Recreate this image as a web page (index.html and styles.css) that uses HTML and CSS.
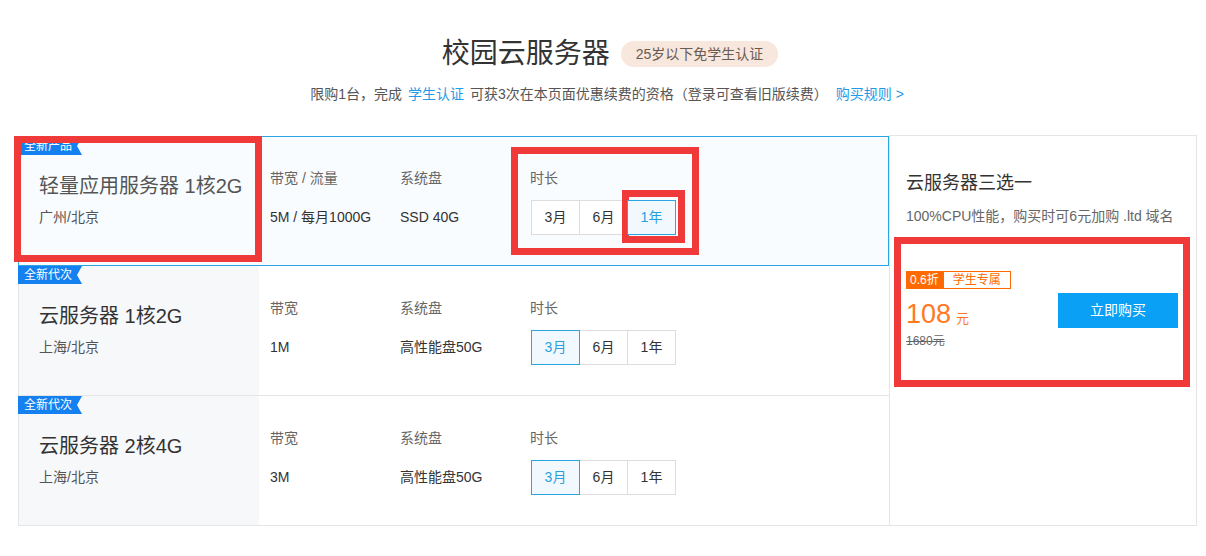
FILE: index.html
```html
<!DOCTYPE html>
<html lang="zh-CN">
<head>
<meta charset="utf-8">
<title>校园云服务器</title>
<link rel="stylesheet" href="styles.css">
</head>
<body>
<div class="page">
  <header class="head">
    <div class="title-line">
      <h1>校园云服务器</h1>
      <span class="pill">25岁以下免学生认证</span>
    </div>
    <p class="sub">限购1台，完成<a class="link">学生认证</a>可获3次在本页面优惠续费的资格（登录可查看旧版续费）<a class="link rule">购买规则 &gt;</a></p>
  </header>

  <section class="plans">
    <div class="rows">
      <div class="row active">
        <div class="name-cell">
          <span class="tag">全新产品</span>
          <div class="name">轻量应用服务器 1核2G</div>
          <div class="region">广州/北京</div>
        </div>
        <div class="spec">
          <div class="lbl">带宽 / 流量</div>
          <div class="val">5M / 每月1000G</div>
        </div>
        <div class="spec">
          <div class="lbl">系统盘</div>
          <div class="val">SSD 40G</div>
        </div>
        <div class="spec dur">
          <div class="lbl">时长</div>
          <div class="opts"><span class="opt">3月</span><span class="opt">6月</span><span class="opt on">1年</span></div>
        </div>
      </div>

      <div class="row">
        <div class="name-cell">
          <span class="tag">全新代次</span>
          <div class="name">云服务器 1核2G</div>
          <div class="region">上海/北京</div>
        </div>
        <div class="spec">
          <div class="lbl">带宽</div>
          <div class="val">1M</div>
        </div>
        <div class="spec">
          <div class="lbl">系统盘</div>
          <div class="val">高性能盘50G</div>
        </div>
        <div class="spec dur">
          <div class="lbl">时长</div>
          <div class="opts"><span class="opt on">3月</span><span class="opt">6月</span><span class="opt">1年</span></div>
        </div>
      </div>

      <div class="row">
        <div class="name-cell">
          <span class="tag">全新代次</span>
          <div class="name">云服务器 2核4G</div>
          <div class="region">上海/北京</div>
        </div>
        <div class="spec">
          <div class="lbl">带宽</div>
          <div class="val">3M</div>
        </div>
        <div class="spec">
          <div class="lbl">系统盘</div>
          <div class="val">高性能盘50G</div>
        </div>
        <div class="spec dur">
          <div class="lbl">时长</div>
          <div class="opts"><span class="opt on">3月</span><span class="opt">6月</span><span class="opt">1年</span></div>
        </div>
      </div>
    </div>

    <aside class="buy">
      <h3 class="buy-title">云服务器三选一</h3>
      <p class="desc">100%CPU性能，购买时可6元加购 .ltd 域名</p>
      <div class="deal">
        <div class="price-block">
          <div class="labels"><span class="off">0.6折</span><span class="stu">学生专属</span></div>
          <div class="price"><span class="num">108</span><span class="unit">元</span></div>
          <div class="orig">1680元</div>
        </div>
        <a class="cta">立即购买</a>
      </div>
    </aside>
  </section>

  <div class="mark m1"></div>
  <div class="mark m2"></div>
  <div class="mark m3"></div>
  <div class="mark m4"></div>
</div>
</body>
</html>
```

FILE: styles.css
```css
body {
  margin: 0;
  background: #fff;
  color: #333;
  font-family: "Liberation Sans", "Noto Sans CJK SC", sans-serif;
}

.page {
  position: relative;
  width: 1206px;
  height: 556px;
  overflow: hidden;
}

/* header */
.head {
  padding-top: 34px;
  text-align: center;
}

.title-line {
  display: flex;
  justify-content: center;
  align-items: center;
  gap: 11px;
  height: 40px;
  padding-left: 14px;
}

.title-line h1 {
  margin: 0;
  font-size: 28px;
  line-height: 40px;
  font-weight: normal;
  color: #333;
}

.pill {
  height: 26px;
  line-height: 26px;
  padding: 0 15px;
  border-radius: 13px;
  background: #f7e7dd;
  color: #6b5a50;
  font-size: 14px;
}

.sub {
  margin: 10px 0 0;
  padding-left: 14px;
  font-size: 14px;
  line-height: 20px;
  color: #555;
}

.link {
  color: #1f9be6;
  margin: 0 6px;
}

.rule {
  margin-left: 8px;
}

/* plans */
.plans {
  display: flex;
  width: 1179px;
  margin: 31px 0 0 18px;
}

.rows {
  width: 872px;
  margin-top: 1px;
}

.row {
  position: relative;
  display: flex;
  height: 130px;
  box-sizing: border-box;
  border-left: 1px solid #e5e5e5;
  border-bottom: 1px solid #e5e5e5;
}

.row.active {
  border: 1px solid #2aa5e2;
  background: #f8fcff;
}

.name-cell {
  position: relative;
  flex: none;
  width: 240px;
  box-sizing: border-box;
  padding: 36px 0 0 20px;
  background: #f7f8fa;
}

.active .name-cell {
  background: transparent;
  padding-top: 35px;
}

.tag {
  position: absolute;
  left: -1px;
  top: 0;
  height: 18px;
  line-height: 18px;
  padding: 0 10px 0 6px;
  background: #1580f0;
  color: #fff;
  font-size: 12px;
  clip-path: polygon(0 0, 100% 0, calc(100% - 5px) 50%, 100% 100%, 0 100%);
}

.name {
  font-size: 20px;
  line-height: 28px;
  color: #333;
}

.active .name {
  color: #555;
}

.region {
  margin-top: 7px;
  font-size: 14px;
  line-height: 20px;
  color: #555;
}

.spec {
  flex: none;
  width: 130px;
  box-sizing: border-box;
  padding: 33px 0 0 11px;
}

.spec.dur {
  width: 200px;
}

.active .spec {
  padding-top: 32px;
}

.lbl {
  font-size: 14px;
  line-height: 18px;
  color: #666;
}

.val {
  margin-top: 13px;
  height: 35px;
  line-height: 35px;
  font-size: 14px;
  color: #333;
}

.opts {
  display: flex;
  margin: 13px 0 0 1px;
}

.opt {
  flex: none;
  width: 49px;
  height: 35px;
  box-sizing: border-box;
  border: 1px solid #ddd;
  margin-left: -1px;
  text-align: center;
  line-height: 33px;
  font-size: 14px;
  color: #333;
  background: #fff;
}

.opt:first-child {
  margin-left: 0;
}

.opt.on {
  position: relative;
  z-index: 1;
  border-color: #2aa5e2;
  color: #2a9fe0;
  background: #f2f9fe;
}

/* buy panel */
.buy {
  flex: none;
  width: 308px;
  height: 391px;
  box-sizing: border-box;
  border: 1px solid #e5e5e5;
  padding: 35px 18px 0 16px;
}

.buy-title {
  margin: 0;
  font-size: 18px;
  line-height: 24px;
  font-weight: normal;
  color: #333;
}

.desc {
  margin: 11px 0 0;
  font-size: 14px;
  line-height: 20px;
  color: #666;
}

.deal {
  display: flex;
  justify-content: space-between;
  align-items: center;
  margin-top: 45px;
}

.labels {
  display: flex;
  height: 18px;
}

.off {
  height: 18px;
  line-height: 18px;
  padding: 0 4px;
  background: #ff6a00;
  color: #fff;
  font-size: 12px;
}

.stu {
  height: 18px;
  line-height: 16px;
  box-sizing: border-box;
  padding: 0 9px;
  border: 1px solid #ff6a00;
  color: #ff6a00;
  font-size: 12px;
  background: #fff;
}

.price {
  margin-top: 9px;
  height: 32px;
  line-height: 32px;
  color: #ff7a1f;
}

.num {
  font-size: 27px;
}

.unit {
  margin-left: 5px;
  font-size: 13px;
}

.orig {
  margin-top: 3px;
  font-size: 12px;
  line-height: 16px;
  color: #666;
  text-decoration: line-through;
}

.cta {
  width: 120px;
  height: 35px;
  line-height: 35px;
  text-align: center;
  background: #0aa0f5;
  color: #fff;
  font-size: 14px;
}

/* red annotation boxes over the screenshot */
.mark {
  position: absolute;
  box-sizing: border-box;
  border: 7px solid #f03a3a;
}

.m1 { left: 14px; top: 136px; width: 248px; height: 126px; }
.m2 { left: 511px; top: 147px; width: 188px; height: 108px; }
.m3 { left: 622px; top: 190px; width: 63px; height: 53px; }
.m4 { left: 894px; top: 237px; width: 296px; height: 150px; }
```
